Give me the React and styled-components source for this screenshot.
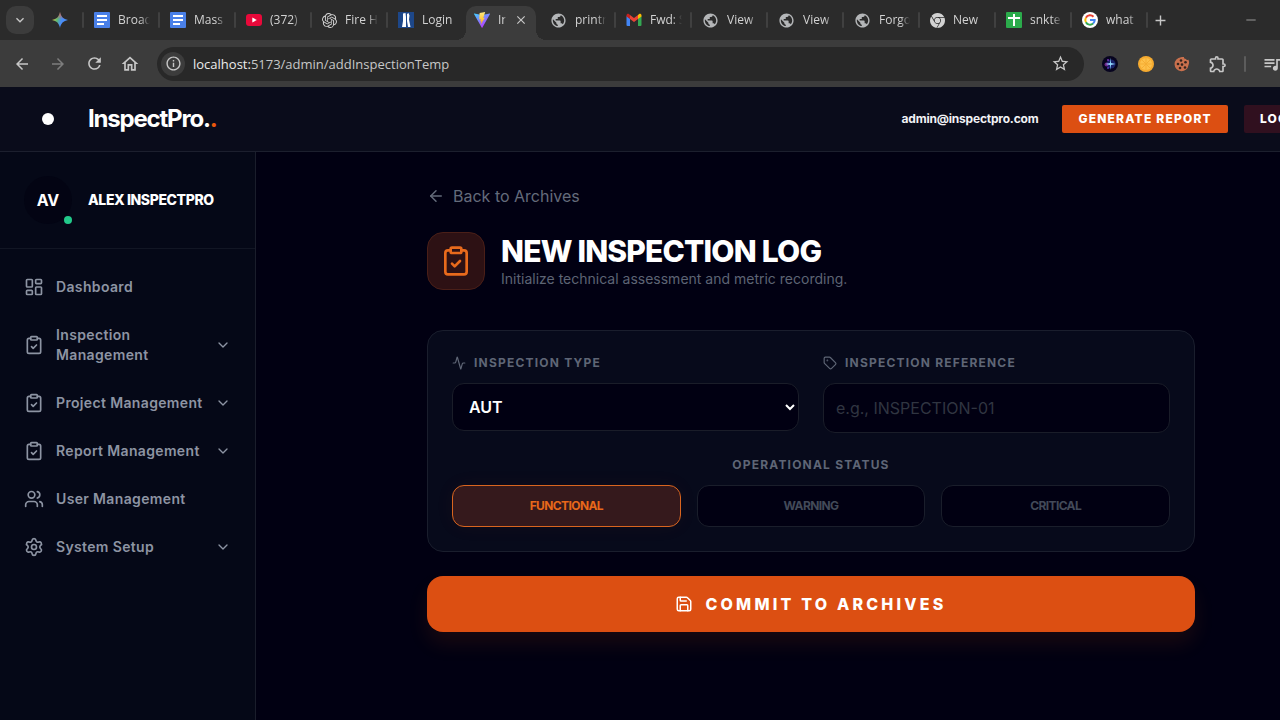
import React, { useState } from 'react';
import styled, { createGlobalStyle, css } from 'styled-components';
import {
    Activity,
    ArrowLeft,
    ChevronDown,
    ClipboardCheck,
    LayoutDashboard,
    Save,
    Settings,
    Tag,
    Users,
} from 'lucide-react';
import {
    MdAdd,
    MdArrowBack,
    MdArrowForward,
    MdClose,
    MdKeyboardArrowDown,
    MdOutlineExtension,
    MdOutlineHome,
    MdOutlineInfo,
    MdPublic,
    MdQueueMusic,
    MdRefresh,
    MdRemove,
    MdStarBorder,
} from 'react-icons/md';
import { SiGooglechrome, SiOpenai } from 'react-icons/si';

const GlobalStyle = createGlobalStyle`
    *, *::before, *::after {
        box-sizing: border-box;
    }

    body {
        margin: 0;
        background: #010012;
        color: #ffffff;
        font-family: Inter, "Liberation Sans", sans-serif;
    }

    button, input, select {
        font-family: inherit;
        margin: 0;
    }
`

const Screen = styled.div`
    height: 100vh;
    overflow: hidden;
`

// the window is wider than the visible area and runs out on the right
const Window = styled.div`
    display: flex;
    flex-direction: column;
    width: calc(100% + 86px);
    height: 100%;
`

/* ---------- browser ---------- */

const Browser = styled.div`
    background: #3c3c3c;
    color: #d2d2d2;
    font-family: "Open Sans", "Noto Sans", sans-serif;
`

const TabStrip = styled.div`
    display: flex;
    align-items: center;
    height: 40px;
    padding-left: 6px;
    background: #2b2b2b;
`

const ChromeButton = styled.button`
    display: flex;
    flex: none;
    align-items: center;
    justify-content: center;
    width: ${props => props.$width || 36}px;
    height: 28px;
    padding: 0;
    border: 0;
    border-radius: 10px;
    background: ${props => props.$filled ? '#3c3c3c' : 'transparent'};
    color: ${props => props.$dim ? '#7d7d7d' : '#c7c7c7'};
`

const Separator = styled.span`
    flex: none;
    width: 2px;
    height: 16px;
    border-radius: 1px;
    background: ${props => props.$bright ? '#5c5c5c' : '#404040'};
`

const Tab = styled.div`
    display: flex;
    flex: none;
    align-items: center;
    gap: 8px;
    width: 76px;
    padding-left: 10px;
    font-size: 12px;
    line-height: 18px;

    > svg {
        flex: none;
    }
`

const PinnedTab = styled(Tab)`
    width: 50px;
    padding-left: 18px;
    justify-content: space-between;
`

const TabLabel = styled.span`
    flex: 1;
    min-width: 0;
    overflow: hidden;
    white-space: nowrap;
    mask-image: linear-gradient(to right, #000 70%, transparent);
`

const ActiveTab = styled(Tab)`
    position: relative;
    align-self: flex-end;
    width: 70px;
    height: 34px;
    margin: 0 4px 0 2px;
    padding: 0 8px 6px;
    border-radius: 10px 10px 0 0;
    background: #3c3c3c;

    &::before, &::after {
        content: '';
        position: absolute;
        bottom: 0;
        width: 10px;
        height: 10px;
    }

    &::before {
        right: 100%;
        background: radial-gradient(circle at 0 0, #2b2b2b 10px, #3c3c3c 10px);
    }

    &::after {
        left: 100%;
        background: radial-gradient(circle at 100% 0, #2b2b2b 10px, #3c3c3c 10px);
    }
`

const WindowControls = styled.div`
    display: flex;
    margin-left: auto;
    padding-right: 92px;
`

const Toolbar = styled.div`
    display: flex;
    align-items: center;
    height: 47px;
    padding-left: 4px;
`

const AddressBar = styled.div`
    display: flex;
    flex: 1;
    align-items: center;
    height: 34px;
    margin-left: 9px;
    padding: 0 6px 0 4px;
    border-radius: 17px;
    background: #282828;
`

const SiteInfo = styled.button`
    display: flex;
    align-items: center;
    justify-content: center;
    width: 24px;
    height: 24px;
    padding: 0;
    border: 0;
    border-radius: 50%;
    background: #3c3c3c;
    color: #c7c7c7;
`

const Url = styled.span`
    flex: 1;
    margin-left: 8px;
    color: #c7c7c7;
    font-size: 13px;
    line-height: 20px;

    b {
        color: #ececec;
        font-weight: 400;
    }
`

const Extensions = styled.div`
    display: flex;
    flex: 0 0 282px;
    align-items: center;
    padding-left: 8px;
`

const DocsLogo = () => (
    <svg width="16" height="16" viewBox="0 0 16 16">
        <rect width="16" height="16" rx="1" fill="#4a80e8" />
        <path d="M3 4h10M3 8h10M3 12h7" stroke="#fff" strokeWidth="2" />
    </svg>
)

const GeminiLogo = () => (
    <svg width="16" height="16" viewBox="0 0 16 16">
        <defs>
            <linearGradient id="gemini" x1="0" y1="0.3" x2="1" y2="0.6">
                <stop offset="0" stopColor="#f5c93a" />
                <stop offset="0.35" stopColor="#5bb974" />
                <stop offset="0.6" stopColor="#4a8df6" />
                <stop offset="1" stopColor="#4a8df6" />
            </linearGradient>
            <linearGradient id="geminiTop" x1="0" y1="0" x2="0" y2="1">
                <stop offset="0" stopColor="#ee4d5d" />
                <stop offset="0.45" stopColor="#ee4d5d" stopOpacity="0" />
            </linearGradient>
        </defs>
        <path d="M8 0c.8 4.600 3.400 7.200 8 8-4.600.8-7.200 3.400-8 8-.8-4.600-3.400-7.200-8-8 4.600-.8 7.200-3.400 8-8z" fill="url(#gemini)" />
        <path d="M8 0c.8 4.600 3.400 7.200 8 8-4.600.8-7.200 3.400-8 8-.8-4.600-3.400-7.200-8-8 4.600-.8 7.200-3.400 8-8z" fill="url(#geminiTop)" />
    </svg>
)

const YoutubeLogo = () => (
    <svg width="16" height="16" viewBox="0 0 16 16">
        <rect y="2" width="16" height="12" rx="3" fill="#e8093a" />
        <path d="M6.300 5.400v5.200L10.800 8z" fill="#fff" />
    </svg>
)

const LoginLogo = () => (
    <svg width="16" height="16" viewBox="0 0 16 16">
        <rect width="16" height="16" fill="#1d4789" />
        <path d="M5 1.500l2.500-.5.500 4V15H4l1-6z" fill="#fff" />
        <path d="M9 2l1.500-1 1 2.500-.5 4 1.500 7.500H10L9 9z" fill="#fff" />
    </svg>
)

const ViteLogo = () => (
    <svg width="16" height="16" viewBox="0 0 16 16">
        <defs>
            <linearGradient id="vite" x1="0" y1="0" x2="0.6" y2="1">
                <stop offset="0" stopColor="#41d1ff" />
                <stop offset="1" stopColor="#bd34fe" />
            </linearGradient>
            <linearGradient id="bolt" x1="0" y1="0" x2="0" y2="1">
                <stop offset="0" stopColor="#ffea83" />
                <stop offset="1" stopColor="#ffa800" />
            </linearGradient>
        </defs>
        <path d="M.2 1.600L8 3l7.800-1.400c.2 0 .3.200.2.400L8.300 15.800c-.1.200-.4.200-.5 0L0 2c-.1-.2 0-.4.200-.4z" fill="url(#vite)" />
        <path d="M11.200 0L5.600 1.100 5.200 7.500l1.600-.4-.5 2.400 1.100-.3-.8 3.600 4.200-7-1.600.3z" fill="url(#bolt)" />
    </svg>
)

const GmailLogo = () => (
    <svg width="16" height="16" viewBox="0 0 16 16">
        <path d="M.5 4v9a1 1 0 0 0 1 1H4V6.500z" fill="#4285f4" />
        <path d="M12 14h2.500a1 1 0 0 0 1-1V4L12 6.500z" fill="#34a853" />
        <path d="M12 3v4l3.500-2.600V3.500c0-1.400-1.500-2.100-2.600-1.300z" fill="#fbbc04" />
        <path d="M4 7V3l4 3 4-3v4L8 10z" fill="#ea4335" />
        <path d="M.5 3.500v.9L4 7V3l-.9-.8C2 1.400.5 2.100.5 3.500z" fill="#c5221f" />
    </svg>
)

const SheetsLogo = () => (
    <svg width="16" height="16" viewBox="0 0 16 16">
        <rect width="16" height="16" rx="1" fill="#2bab4b" />
        <path d="M8 2v12M2 6h12" stroke="#fff" strokeWidth="2" />
    </svg>
)

const GoogleLogo = () => (
    <svg width="16" height="16" viewBox="0 0 16 16">
        <circle cx="8" cy="8" r="8" fill="#fff" />
        <g fill="none" strokeWidth="2">
            <path d="M11.500 4.700A4.700 4.700 0 0 0 3.900 5.700" stroke="#ea4335" />
            <path d="M3.900 5.700a4.700 4.700 0 0 0 0 4.600" stroke="#fbbc05" />
            <path d="M3.900 10.300a4.700 4.700 0 0 0 7.200 1.200" stroke="#34a853" />
            <path d="M11.100 11.500A4.500 4.500 0 0 0 12.700 8H8" stroke="#4285f4" />
        </g>
    </svg>
)

const GalaxyLogo = () => (
    <svg width="16" height="16" viewBox="0 0 16 16">
        <circle cx="8" cy="8" r="8" fill="#07041f" />
        <circle cx="9" cy="8" r="4.500" fill="#2b3fb8" opacity="0.5" />
        <circle cx="4.500" cy="8.500" r="2" fill="#b03cc8" opacity="0.6" />
        <circle cx="6" cy="4" r="1" fill="#8e3cd8" opacity="0.8" />
        <circle cx="6" cy="12" r="1" fill="#6a3cd8" opacity="0.8" />
        <path d="M8.500 1.500l.5 5.500 4.500 1L9 9l-.5 5-.5-5-4.500-1L8 7z" fill="#8fd8ff" />
    </svg>
)

const OrangeLogo = () => (
    <svg width="16" height="16" viewBox="0 0 16 16">
        <circle cx="8" cy="8" r="8" fill="#f6ab30" />
        <circle cx="8" cy="8" r="6" fill="#fdc04a" />
        <path d="M8 2v12M2 8h12M4 4l8 8M12 4l-8 8" stroke="#f5ad33" strokeWidth="1" />
    </svg>
)

const CookieLogo = () => (
    <svg width="16" height="16" viewBox="0 0 16 16">
        <path d="M7 1.200a7 7 0 1 0 7.500 7.800c1-2 .7-4-.3-5.600-.7 1-2 .6-2.200-.4C10.500 3 9.800 2 10 1 9 .8 8 .9 7 1.200z" fill="#c9704d" />
        <g fill="#33241f">
            <circle cx="7" cy="4.500" r="1.300" />
            <circle cx="11.500" cy="6.200" r="1.300" />
            <circle cx="4" cy="8" r="1.300" />
            <circle cx="8" cy="8.600" r="1.300" />
            <circle cx="6" cy="12" r="1.300" />
            <circle cx="11" cy="11.500" r="1.300" />
        </g>
    </svg>
)

const GlobeLogo = () => <MdPublic size={17} color="#b4b6b8" />

const leftTabs = [
    { label: 'Broad', icon: <DocsLogo /> },
    { label: 'Mass', icon: <DocsLogo /> },
    { label: '(372)', icon: <YoutubeLogo /> },
    { label: 'Fire H', icon: <SiOpenai size={15} /> },
    { label: 'Login', icon: <LoginLogo />, last: true },
]

const rightTabs = [
    { label: 'printr', icon: <GlobeLogo /> },
    { label: 'Fwd: S', icon: <GmailLogo /> },
    { label: 'View', icon: <GlobeLogo /> },
    { label: 'View', icon: <GlobeLogo /> },
    { label: 'Forgo', icon: <GlobeLogo /> },
    { label: 'New', icon: <SiGooglechrome size={15} /> },
    { label: 'snkte', icon: <SheetsLogo /> },
    { label: 'what', icon: <GoogleLogo /> },
]

const renderTab = (tab, index) => (
    <Tab key={index}>
        {tab.icon}
        <TabLabel>{tab.label}</TabLabel>
        {!tab.last && <Separator />}
    </Tab>
)

const BrowserChrome = () => (
    <Browser>
        <TabStrip>
            <ChromeButton $width={28} $filled aria-label="Search tabs"><MdKeyboardArrowDown size={16} /></ChromeButton>
            <PinnedTab>
                <GeminiLogo />
                <Separator />
            </PinnedTab>
            {leftTabs.map(renderTab)}
            <ActiveTab>
                <ViteLogo />
                <TabLabel>In</TabLabel>
                <ChromeButton $width={14} aria-label="Close tab"><MdClose size={14} /></ChromeButton>
            </ActiveTab>
            {rightTabs.map(renderTab)}
            <ChromeButton $width={24} aria-label="New tab"><MdAdd size={17} /></ChromeButton>
            <WindowControls>
                <ChromeButton $width={46} $dim aria-label="Minimize"><MdRemove size={16} /></ChromeButton>
            </WindowControls>
        </TabStrip>
        <Toolbar>
            <ChromeButton aria-label="Back"><MdArrowBack size={18} /></ChromeButton>
            <ChromeButton $dim aria-label="Forward"><MdArrowForward size={18} /></ChromeButton>
            <ChromeButton aria-label="Reload"><MdRefresh size={19} /></ChromeButton>
            <ChromeButton aria-label="Home"><MdOutlineHome size={20} /></ChromeButton>
            <AddressBar>
                <SiteInfo aria-label="Site information"><MdOutlineInfo size={17} /></SiteInfo>
                <Url><b>localhost:</b>5173/admin/addInspectionTemp</Url>
                <ChromeButton aria-label="Bookmark"><MdStarBorder size={19} /></ChromeButton>
            </AddressBar>
            <Extensions>
                <ChromeButton aria-label="Galaxy"><GalaxyLogo /></ChromeButton>
                <ChromeButton aria-label="Orange"><OrangeLogo /></ChromeButton>
                <ChromeButton aria-label="Cookies"><CookieLogo /></ChromeButton>
                <ChromeButton aria-label="Extensions"><MdOutlineExtension size={20} /></ChromeButton>
                <ChromeButton as="span" $width={18}><Separator $bright /></ChromeButton>
                <ChromeButton aria-label="Media"><MdQueueMusic size={20} /></ChromeButton>
            </Extensions>
        </Toolbar>
    </Browser>
)

/* ---------- app header ---------- */

const Header = styled.header`
    display: flex;
    flex: none;
    align-items: center;
    gap: 16px;
    height: 65px;
    padding: 0 32px 0 24px;
    border-bottom: 1px solid #1c1f2e;
    background: #0a0c1b;
`

const MenuButton = styled.button`
    display: flex;
    align-items: center;
    justify-content: center;
    width: 48px;
    height: 48px;
    padding: 0;
    border: 0;
    background: transparent;

    span {
        width: 12px;
        height: 12px;
        border-radius: 50%;
        background: #ffffff;
    }
`

const Brand = styled.div`
    flex: 1;
    font-size: 24px;
    font-weight: 700;
    line-height: 32px;
    letter-spacing: -1.2px;

    span {
        color: #ea580c;
    }
`

const Email = styled.span`
    margin-right: 8px;
    color: #f1f2f5;
    font-size: 12px;
    font-weight: 700;
    line-height: 16px;
    letter-spacing: -0.2px;
`

const HeaderButton = styled.button`
    height: 28px;
    padding: 0 16px;
    border: 0;
    border-radius: 2px;
    background: ${props => props.$danger ? '#30101f' : '#dc4f12'};
    color: #ffffff;
    font-size: 12px;
    font-weight: 800;
    line-height: 16px;
    letter-spacing: 1.2px;
`

/* ---------- sidebar ---------- */

const Body = styled.div`
    display: flex;
    flex: 1;
    min-height: 0;
`

const Sidebar = styled.aside`
    flex: 0 0 256px;
    border-right: 1px solid #1a1d2b;
    background: #050817;
`

const Profile = styled.div`
    display: flex;
    align-items: center;
    gap: 16px;
    padding: 24px;
    border-bottom: 1px solid #121624;
`

const Avatar = styled.div`
    position: relative;
    display: flex;
    align-items: center;
    justify-content: center;
    width: 48px;
    height: 48px;
    border-radius: 50%;
    background: #030413;
    font-size: 16px;
    font-weight: 700;
`

const Online = styled.span`
    position: absolute;
    right: 0;
    bottom: 0;
    width: 8px;
    height: 8px;
    border-radius: 50%;
    background: #22c98a;
`

const ProfileName = styled.div`
    font-size: 14px;
    font-weight: 800;
    line-height: 20px;
    letter-spacing: -0.4px;
`

const Nav = styled.nav`
    display: flex;
    flex-direction: column;
    gap: 4px;
    padding: 16px 12px;
`

const NavItem = styled.button`
    display: flex;
    align-items: center;
    gap: 12px;
    padding: 12px;
    border: 0;
    background: transparent;
    color: #8d94a3;
    font-size: 14px;
    font-weight: 600;
    line-height: 20px;
    letter-spacing: 0.35px;
    text-align: left;

    span {
        flex: 1;
    }

    svg {
        flex: none;
    }
`

const navItems = [
    { label: 'Dashboard', icon: LayoutDashboard },
    { label: 'Inspection Management', icon: ClipboardCheck, expandable: true },
    { label: 'Project Management', icon: ClipboardCheck, expandable: true },
    { label: 'Report Management', icon: ClipboardCheck, expandable: true },
    { label: 'User Management', icon: Users },
    { label: 'System Setup', icon: Settings, expandable: true },
]

/* ---------- form ---------- */

const Main = styled.main`
    flex: 1;
    padding: 32px;
    background: #010012;
`

const Content = styled.form`
    display: flex;
    flex-direction: column;
    max-width: 768px;
    margin: 0 auto;
`

const BackLink = styled.a`
    display: flex;
    align-items: center;
    align-self: flex-start;
    gap: 8px;
    color: #646b7b;
    font-size: 16px;
    line-height: 24px;
    text-decoration: none;
`

const PageHead = styled.div`
    display: flex;
    align-items: center;
    gap: 16px;
    margin: 24px 0 40px;
`

const PageIcon = styled.div`
    display: flex;
    align-items: center;
    justify-content: center;
    width: 58px;
    height: 58px;
    border: 1px solid #4a1f18;
    border-radius: 16px;
    background: #2d1114;
    color: #e86a1c;
`

const Title = styled.h1`
    margin: 0;
    font-size: 30px;
    font-weight: 800;
    line-height: 36px;
    letter-spacing: -0.8px;
`

const Subtitle = styled.p`
    margin: 0;
    color: #5d6474;
    font-size: 14px;
    line-height: 20px;
`

const Card = styled.section`
    display: flex;
    flex-direction: column;
    gap: 24px;
    padding: 24px;
    border: 1px solid #1a1e2d;
    border-radius: 16px;
    background: #070a1b;
`

const FieldRow = styled.div`
    display: grid;
    grid-template-columns: repeat(2, 1fr);
    align-items: start;
    gap: 24px;
`

const Field = styled.div`
    display: flex;
    flex-direction: column;
    gap: 12px;
`

const Label = styled.label`
    display: flex;
    align-items: center;
    justify-content: ${props => props.$center ? 'center' : 'flex-start'};
    gap: 8px;
    color: #5f6676;
    font-size: 12px;
    font-weight: 700;
    line-height: 16px;
    letter-spacing: 1.2px;
`

const control = css`
    width: 100%;
    padding: 0 12px;
    border: 1px solid #1a1d29;
    border-radius: 12px;
    background: #010012;
    color: #ffffff;
    font-size: 16px;
`

const Select = styled.select`
    ${control}
    height: 48px;
    font-weight: 600;
`

const Input = styled.input`
    ${control}
    height: 50px;

    &::placeholder {
        color: #303541;
    }
`

const StatusRow = styled.div`
    display: grid;
    grid-template-columns: repeat(3, 1fr);
    gap: 16px;
`

const StatusButton = styled.button`
    height: 42px;
    border: 1px solid ${props => props.$active ? '#d9651f' : '#1a1e2b'};
    border-radius: 12px;
    background: ${props => props.$active ? '#35191c' : '#010012'};
    box-shadow: ${props => props.$active ? '0 0 20px rgba(234, 88, 12, 0.05)' : 'none'};
    color: ${props => props.$active ? '#e8681a' : '#434a59'};
    font-size: 12px;
    font-weight: 700;
    line-height: 16px;
    letter-spacing: -0.6px;
`

const CommitButton = styled.button`
    display: flex;
    align-items: center;
    justify-content: center;
    gap: 12px;
    height: 56px;
    margin-top: 24px;
    border: 0;
    border-radius: 16px;
    background: #dc4f12;
    box-shadow: 0 12px 20px rgba(234, 88, 12, 0.1);
    color: #ffffff;
    font-size: 16px;
    font-weight: 800;
    line-height: 24px;
    letter-spacing: 3.2px;
`

const statuses = ['FUNCTIONAL', 'WARNING', 'CRITICAL']

const App = () => {
    const [status, setStatus] = useState('FUNCTIONAL')

    return (
        <Screen>
            <GlobalStyle />
            <Window>
                <BrowserChrome />
                <Header>
                    <MenuButton aria-label="Toggle menu"><span /></MenuButton>
                    <Brand>InspectPro.<span>.</span></Brand>
                    <Email>admin@inspectpro.com</Email>
                    <HeaderButton>GENERATE REPORT</HeaderButton>
                    <HeaderButton $danger>LOGOUT</HeaderButton>
                </Header>
                <Body>
                    <Sidebar>
                        <Profile>
                            <Avatar>
                                AV
                                <Online />
                            </Avatar>
                            <ProfileName>ALEX INSPECTPRO</ProfileName>
                        </Profile>
                        <Nav>
                            {navItems.map(({ label, icon: Icon, expandable }) => (
                                <NavItem key={label}>
                                    <Icon size={20} />
                                    <span>{label}</span>
                                    {expandable && <ChevronDown size={16} />}
                                </NavItem>
                            ))}
                        </Nav>
                    </Sidebar>
                    <Main>
                        <Content onSubmit={e => e.preventDefault()}>
                            <BackLink href="#archives">
                                <ArrowLeft size={18} />
                                Back to Archives
                            </BackLink>
                            <PageHead>
                                <PageIcon><ClipboardCheck size={32} /></PageIcon>
                                <div>
                                    <Title>NEW INSPECTION LOG</Title>
                                    <Subtitle>Initialize technical assessment and metric recording.</Subtitle>
                                </div>
                            </PageHead>
                            <Card>
                                <FieldRow>
                                    <Field>
                                        <Label htmlFor="type"><Activity size={14} />INSPECTION TYPE</Label>
                                        <Select id="type" defaultValue="AUT">
                                            <option>AUT</option>
                                        </Select>
                                    </Field>
                                    <Field>
                                        <Label htmlFor="reference"><Tag size={14} />INSPECTION REFERENCE</Label>
                                        <Input id="reference" placeholder="e.g., INSPECTION-01" />
                                    </Field>
                                </FieldRow>
                                <Field role="group" aria-labelledby="status">
                                    <Label as="div" id="status" $center>OPERATIONAL STATUS</Label>
                                    <StatusRow>
                                        {statuses.map(name => (
                                            <StatusButton
                                                key={name}
                                                type="button"
                                                $active={name === status}
                                                aria-pressed={name === status}
                                                onClick={() => setStatus(name)}
                                            >
                                                {name}
                                            </StatusButton>
                                        ))}
                                    </StatusRow>
                                </Field>
                            </Card>
                            <CommitButton type="submit">
                                <Save size={18} />
                                COMMIT TO ARCHIVES
                            </CommitButton>
                        </Content>
                    </Main>
                </Body>
            </Window>
        </Screen>
    )
}

export default App
